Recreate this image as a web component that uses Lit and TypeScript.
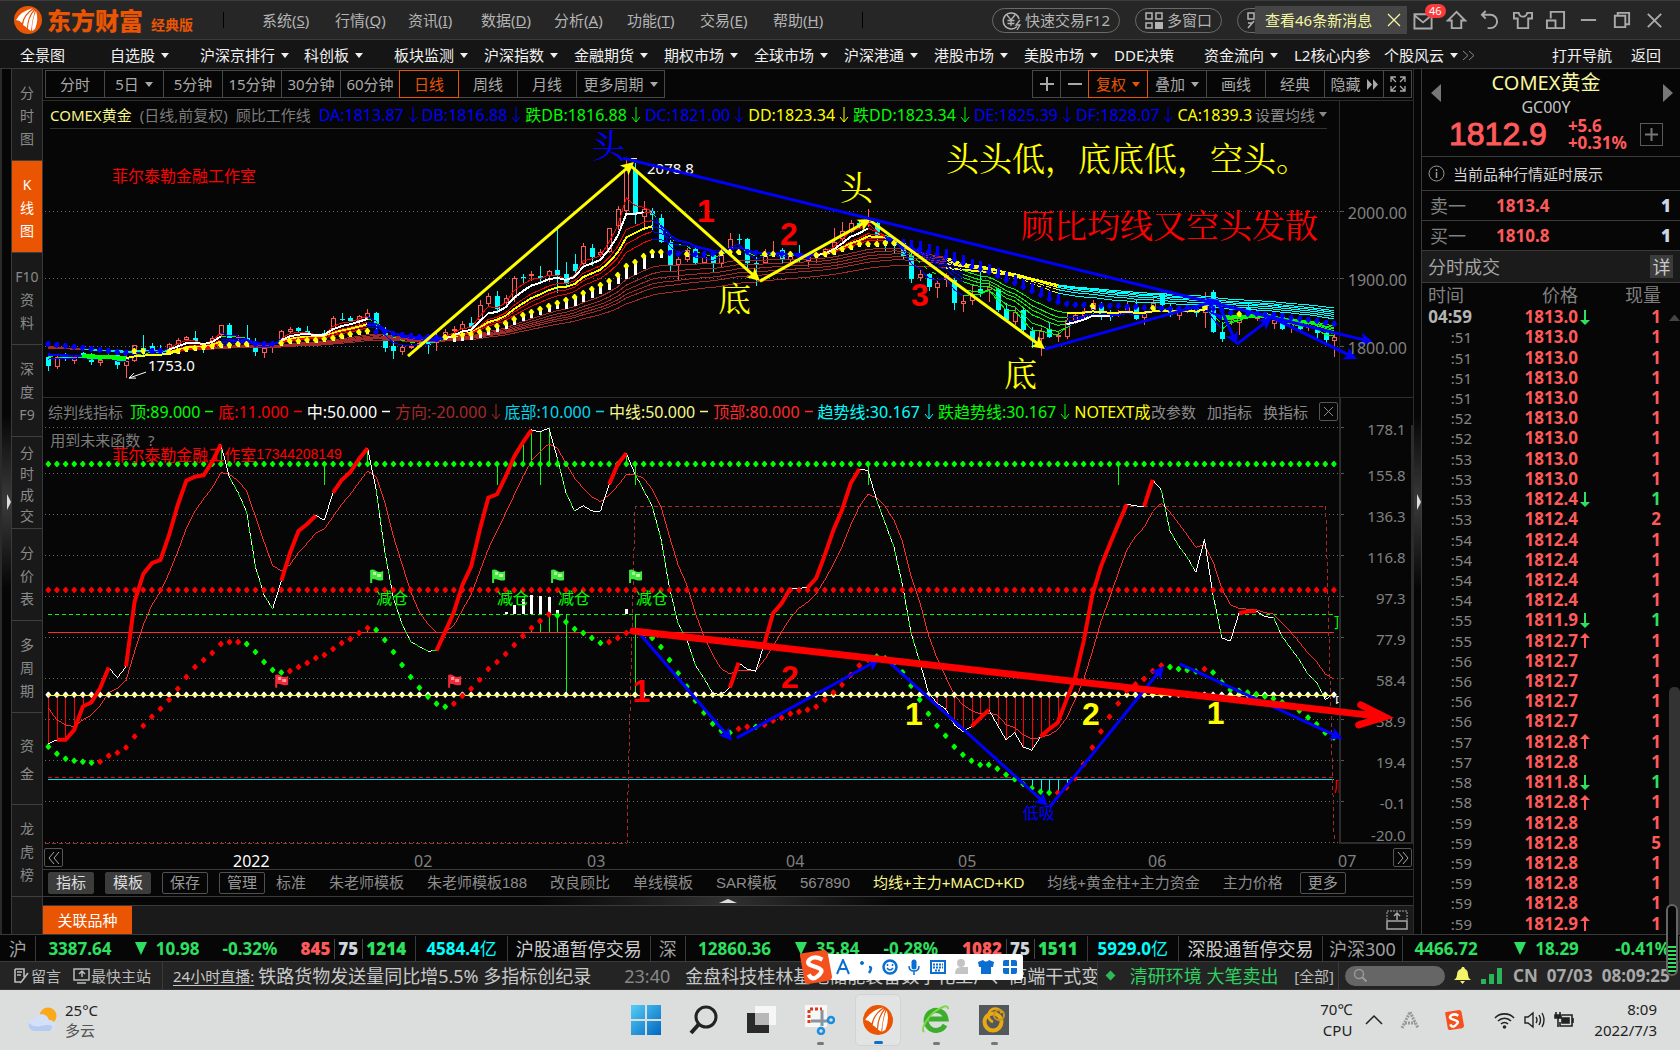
import { LitElement, html, svg, css, nothing } from "lit";
import { customElement } from "lit/decorators.js";

/* ---------- chart geometry ---------- */
const X = (i: number) => Math.round((48 + 8.632 * i) * 10) / 10;
const COUNT = 150;

type Pt = [number, number];

const line = (pts: Pt[], color: string, width = 1, dash = "") =>
  svg`<polyline points=${pts.map((p) => p.join(",")).join(" ")} fill="none" stroke=${color} stroke-width=${width} stroke-dasharray=${dash || nothing}></polyline>`;

const diamonds = (pts: Pt[], color: string) =>
  svg`<path fill=${color} d=${pts.map(([x, y]) => `M${x - 3} ${y}l2.500-3h1l2.500 3-2.500 3h-1z`).join("")}></path>`;

const arrow = (a: Pt, b: Pt, color: string, width: number, size = 13) => {
  const t = Math.atan2(b[1] - a[1], b[0] - a[0]);
  const at = (d: number, o: number): Pt => [
    Math.round((b[0] - d * Math.cos(t) - o * Math.sin(t)) * 10) / 10,
    Math.round((b[1] - d * Math.sin(t) + o * Math.cos(t)) * 10) / 10,
  ];
  const head = [b, at(size, size / 2), at(size * 0.75, 0), at(size, -size / 2)];
  return svg`${line([a, at(size / 2, 0)], color, width)}<polygon points=${head.map((p) => p.join(",")).join(" ")} fill=${color}></polygon>`;
};

const chartCss = css`
  :host { display: block; min-height: 0; }
  svg { display: block; width: 100%; height: 100%; }
  text { font-family: "Noto Sans", "Noto Sans CJK SC", sans-serif; font-size: 15px; dominant-baseline: central; }
  .crisp { shape-rendering: crispEdges; }
  .axis { fill: #808080; text-anchor: end; }
  .price { font-size: 16px; }
  .song { font-family: "Noto Serif CJK SC", "Noto Sans CJK SC", serif; font-size: 33px; }
  .small { font-family: "Noto Sans CJK SC", sans-serif; font-size: 16px; }
  .phone { font-family: "Liberation Sans", sans-serif; font-size: 14px; }
  .num { font-family: "Liberation Sans", sans-serif; font-size: 32px; font-weight: 700; text-anchor: middle; }
`;

/* Candles: kind, high, body top, body bottom, low (thirds of a pixel below y=120) */
const CANDLES = `c705,712,738,752 r705,712,740,747 c700,703,718,722 r708,712,722,732 c695,700,712,715 c700,710,725,734 r705,720,728,738 r700,705,712,716 c690,705,734,747 r690,724,738,773
r675,676,724,726 c645,683,690,705 c668,678,690,700 c675,690,700,707 r668,671,696,700 r655,659,671,676 r648,651,660,664 c633,654,663,665 c670,675,682,700 r648,653,663,668
r615,616,645,650 c609,616,653,655 r645,650,655,670 c615,655,663,668 c655,665,697,708 r680,685,698,713 r665,672,685,698 r630,634,668,670 r622,626,636,640 c620,625,633,635
c618,633,640,645 r645,648,655,660 c630,638,643,652 r588,595,628,630 c578,596,599,604 c587,594,602,606 r585,589,603,612 r567,580,594,598 c575,578,618,640 c620,640,684,696
c650,678,692,717 r675,681,695,704 r672,678,682,686 r665,670,680,684 c660,665,675,701 r640,655,668,692 r627,636,655,660 r618,627,634,637 r602,611,628,632 c590,608,620,630
r541,556,600,605 r520,529,552,562 c513,527,568,580 r526,533,548,560 r468,475,533,545 c463,471,474,490 r453,462,468,483 c438,467,473,490 r449,454,468,486 c325,450,466,518
c425,462,492,498 c402,432,452,470 r370,379,432,437 c372,384,410,438 r388,397,405,412 r323,325,396,400 r258,267,317,330 r118,150,272,278 c130,150,280,312 r243,267,290,325
c265,272,285,330 c282,293,365,370 c360,367,435,456 r412,418,434,480 r385,390,420,426 c375,388,430,432 r400,412,428,432 c400,405,432,457 r388,395,433,440 r340,357,385,392
c342,357,360,372 c354,357,428,445 c410,430,436,497 r388,400,428,433 r364,400,405,412 c385,390,418,430 r395,402,420,427 c375,400,410,430 r405,410,422,440 r395,400,410,428
r385,388,395,408 r325,365,390,395 r307,333,358,368 r300,310,335,340 c300,310,318,328 r268,296,308,320 c300,308,355,372 c350,360,368,395 c350,360,375,398 c358,370,408,418
c395,405,476,490 r450,463,475,482 c460,462,500,512 r480,488,503,533 r460,465,480,500 c475,480,548,570 r528,542,552,575 r495,522,542,555 c450,508,520,530 r485,500,510,545
c505,507,570,575 c548,567,600,605 r565,575,605,615 c560,570,630,640 c622,632,660,684 r625,632,658,708 c608,628,650,655 r632,646,652,665 r575,600,650,658 r582,585,600,612
r565,573,588,595 r540,548,570,575 c545,557,590,600 c570,578,590,602 r570,575,582,590 r545,560,575,580 c540,560,598,600 r570,575,595,615 r530,548,570,578 c520,522,555,560
c550,565,585,590 r565,572,588,600 r555,560,575,580 c555,565,580,592 r516,548,578,624 c510,516,635,640 c605,635,656,665 r560,590,600,615 r565,595,608,645 c550,560,575,590
r570,578,598,602 c575,580,590,600 r590,600,612,628 c600,605,628,630 r600,610,620,640 c598,602,628,632 r610,618,625,632 c610,630,638,656 c630,638,660,672 r640,652,662,710`
  .split(/\s+/)
  .map((s) => ({ up: s[0] === "r", v: s.slice(1).split(",").map((n) => 120 + Number(n) / 3) }));

const CLOSES = CANDLES.map((c) => (c.up ? c.v[1] : c.v[2]));
const ema = (n: number, start: number): Pt[] => {
  const k = 2 / (n + 1);
  let e = start;
  return CLOSES.map((c, i) => {
    e += (c - e) * k;
    return [X(i), Math.round(e * 10) / 10];
  });
};
const SHORT = [3, 5, 8, 10, 12, 15].map((n) => ema(n, 352));
const LONG = [30, 35, 40, 45, 50, 60].map((n, i) => ema(n, 345 + i / 2));

/* Centre average, given at its turning points and interpolated between them */
const MID_KEYS: Pt[] = [[0, 672], [5, 686], [9, 700], [10, 694], [13, 692], [14, 697], [16, 687], [20, 675], [22, 672], [26, 672], [28, 663], [32, 657], [34, 648], [37, 632], [39, 637], [42, 648], [45, 653], [47, 648], [50, 637], [53, 608], [56, 575], [59, 550], [62, 520], [65, 483], [66, 465], [67, 437], [68, 425], [69, 407], [70, 395], [71, 395], [72, 400], [76, 403], [80, 395], [83, 402], [86, 403], [88, 410], [90, 402], [92, 388], [94, 373], [98, 368], [99, 380], [101, 388], [104, 410], [107, 440], [109, 455], [111, 480], [113, 500], [115, 525], [117, 547], [119, 555], [125, 560], [130, 567], [134, 562], [137, 580], [142, 585], [146, 600], [149, 612]];
const MID: Pt[] = Array.from({ length: COUNT }, (_, i) => {
  const k = Math.max(1, MID_KEYS.findIndex((p) => p[0] >= i));
  const [a, b] = [MID_KEYS[k - 1], MID_KEYS[k]];
  return [X(i), Math.round(120 + (a[1] + ((b[1] - a[1]) * (i - a[0])) / (b[0] - a[0])) / 3)];
});
const within = (i: number, spans: Pt[]) => spans.some(([a, b]) => i >= a && i <= b);
const RISING: Pt[] = [[10, 11], [14, 23], [27, 37], [46, 71], [74, 74], [78, 80], [83, 84], [86, 86], [89, 98], [121, 121], [128, 128], [134, 134], [138, 138]];

@customElement("price-chart")
export class PriceChart extends LitElement {
  static styles = chartCss;

  render() {
    const cut = (l: Pt[], a: number, b: number) => l.slice(a, b + 1);
    const rise: Pt[] = [[14, 20], [27, 37], [46, 70], [89, 97]];
    const bold: Pt[] = [[14, 20], [27, 37], [46, 69], [89, 95]];
    const fall: Pt[] = [[0, 14], [20, 27], [37, 46], [70, 89], [97, 106], [118, 136]];
    const green: Pt[] = [[106, 118], [136, 149]];
    const idx = MID.map((_, i) => i);
    return html`<svg viewBox="43 129 1370 268" role="img" aria-label="COMEX黄金日线">
      <g class="crisp">
        ${[211, 278, 346].map((y) => svg`<path d=${`M45 ${y}.5H1340`} stroke="#6a6a6a" stroke-dasharray="1 3"></path><path d=${`M1340 ${y}.5h4`} stroke="#555"></path>`)}
        <path d="M1339.500 129V397" stroke="#2c2c2c"></path>
        ${CANDLES.map(({ up, v }, i) => {
          const x = Math.round(X(i));
          const [h, t, b, l] = v.map(Math.round);
          return up
            ? svg`<path d=${`M${x}.5 ${h}V${t}M${x}.5 ${b}V${l}`} stroke="#ff5a5a"></path><rect x=${x - 1.5} y=${t + 0.5} width="4" height=${Math.max(1, b - t - 1)} fill="none" stroke="#ff5a5a"></rect>`
            : svg`<path d=${`M${x}.5 ${h}V${l}`} stroke="#0ff"></path><rect x=${x - 2} y=${t} width="5" height=${Math.max(1, b - t)} fill="#0ff"></rect>`;
        })}
        ${LONG.map((l, n) => [
          line(cut(l, 0, 4), "#a52a2a"),
          line(cut(l, 4, 14), "#00e5e5"),
          line(cut(l, 14, 104), "#a52a2a"),
          line(cut(l, 104, 117), "#ff0", n > 3 ? 2 : 1, n < 2 ? "6 2" : ""),
          line(cut(l, 117, 149), "#0ff"),
        ])}
        ${rise.map(([a, b]) => SHORT.map((l, n) => line(cut(l, a, b), n === 3 ? "#ff0" : "#f00", n === 3 ? 2 : 1)))}
        ${fall.map(([a, b]) => SHORT.map((l, n) => line(cut(l, a, b), n === 1 ? "#0f0" : "#00f", 1, n === 1 ? "5 5" : "")))}
        ${green.map(([a, b]) => SHORT.map((l) => line(cut(l, a, b), "#0f0")))}
        ${[4, 5].map((n) => line(cut(SHORT[n], 4, 9), "#0f0", 4))}
        ${line(cut(SHORT[5], 9, 15), "#ff0", 2)}
        ${line(cut(SHORT[5], 118, 134), "#ff0", 2)}
        ${line(cut(SHORT[2], 118, 123), "#fff", 2)}
        ${line(cut(SHORT[4], 136, 142), "#0f0", 4)}
        ${bold.map(([a, b]) => line(cut(SHORT[1], a, b), "#fff", 2))}
        ${idx.map((i) => {
          const [x, y] = MID[i];
          if (within(i, RISING)) {
            const len = i >= 47 && i <= 71 ? (i < 60 ? 6 : i < 67 ? 9 : i < 70 ? 13 : 6) : 3;
            return svg`<rect x=${Math.round(x) - 1} y=${y} width="3" height=${len} fill="#fff"></rect>`;
          }
          const len = i > 98 && i < 118 ? 8 : 3;
          return svg`<rect x=${Math.round(x) - 1} y=${y - len} width="3" height=${len} fill="#00f"></rect>`;
        })}
      </g>
      ${diamonds(idx.filter((i) => within(i, RISING)).map((i) => MID[i]), "#ff0")}
      ${diamonds(idx.filter((i) => !within(i, RISING)).map((i) => MID[i]), "#00f")}
      <text class="small" x="112" y="175" fill="#f00">菲尔泰勒金融工作室</text>
      <text x="148" y="365" fill="#fff">1753.0</text>
      <path d="M146 372L129 378M134 373l-5 5 7 0" stroke="#fff" fill="none"></path>
      <text x="647" y="168" fill="#fff">2078.8</text>
      <path d="M631 158.500h6" stroke="#fff"></path>
      ${arrow([408, 356], [634, 162], "#ff0", 3)}
      ${arrow([630, 165], [760, 281], "#ff0", 3)}
      ${arrow([760, 281], [871, 219], "#ff0", 3)}
      ${arrow([871, 221], [1045, 349], "#ff0", 3)}
      ${arrow([623, 158], [1373, 342], "#00f", 3)}
      ${arrow([1045, 349], [1219, 300], "#00f", 3)}
      ${arrow([1217, 300], [1237, 345], "#00f", 3)}
      ${arrow([1237, 344], [1272, 317], "#00f", 3)}
      ${arrow([1271, 317], [1357, 359], "#00f", 3)}
      <text class="song" x="592" y="143" fill="#00f">头</text>
      <text class="song" x="718" y="296" fill="#ff0">底</text>
      <text class="song" x="840" y="185" fill="#ff0">头</text>
      <text class="song" x="1004" y="371" fill="#ff0">底</text>
      <text class="song" x="946" y="156" fill="#ff0">头头低，底底低，空头。</text>
      <text class="song" x="1021" y="223" fill="#f00">顾比均线又空头发散</text>
      <text class="num" x="706" y="211" fill="#f00">1</text>
      <text class="num" x="789" y="234" fill="#f00">2</text>
      <text class="num" x="920" y="295" fill="#f00">3</text>
      ${[["2000.00", 213], ["1900.00", 280], ["1800.00", 348]].map(([t, y]) => svg`<text class="axis price" x="1407" y=${y}>${t}</text>`)}
    </svg>`;
  }
}

const toY = (s: string): Pt[] => s.split(",").map((n, i) => [X(i), Math.round((395 + Number(n) / 3) * 10) / 10]);

const FAST = toY("1047,1035,1035,1005,935,922,880,818,849,815,620,537,505,495,420,330,257,245,241,200,148,248,293,352,515,600,642,558,475,408,387,362,375,293,255,232,192,160,285,470,610,688,740,755,769,767,710,652,570,515,405,308,298,245,185,142,105,111,99,190,295,348,332,348,349,268,208,175,238,285,335,430,580,685,735,812,850,895,900,878,803,823,829,745,655,625,580,580,578,550,480,405,345,265,222,227,315,385,455,570,715,800,893,925,942,990,1010,995,970,945,990,1035,1013,1057,1066,1025,1003,983,915,850,740,600,515,450,388,328,333,334,255,285,408,452,487,532,433,600,729,739,655,650,648,666,667,725,760,795,838,862,915,895");
const SLOW = toY("940,975,990,995,975,960,933,893,880,857,770,690,630,590,535,470,400,348,312,278,233,238,258,288,365,440,512,528,510,473,445,415,402,365,328,298,262,228,245,322,425,508,590,652,688,712,712,692,645,600,530,462,408,355,300,245,198,170,147,160,205,250,280,305,320,300,272,239,239,250,283,335,425,510,570,655,725,780,822,837,827,826,827,795,755,710,670,640,622,597,555,508,455,390,335,298,308,335,375,440,545,620,720,790,845,900,930,947,957,955,960,990,998,1020,1032,1028,1020,1005,970,915,855,770,680,610,535,465,425,397,350,325,352,385,420,457,450,500,580,630,640,643,645,653,657,685,712,742,775,800,838,852");
const TREND = toY("1056,1077,1092,1098,1101,1104,1101,1083,1074,1058,1025,993,966,942,915,882,846,816,795,774,747,741,741,747,771,801,825,833,828,816,804,789,780,762,744,732,714,699,705,735,771,810,846,879,906,927,936,927,903,882,855,822,801,777,750,723,699,678,659,662,681,702,714,729,744,741,729,714,708,715,729,756,795,835,875,918,954,987,1008,1014,1002,996,996,990,978,969,957,951,945,936,915,893,870,840,812,795,785,790,805,832,873,915,957,993,1023,1056,1080,1098,1110,1110,1122,1140,1153,1168,1180,1191,1194,1194,1178,1150,1108,1058,1010,966,926,888,868,852,828,812,816,822,825,830,822,833,862,885,888,893,898,905,912,922,935,948,968,988,1014,1028");
const TREND_UP: Pt[] = [[6, 22], [28, 37], [47, 58], [65, 68], [80, 81], [83, 95], [117, 129], [134, 134]];
const THICK: Pt[] = [[1, 7], [9, 20], [27, 31], [33, 37], [45, 56], [65, 67], [79, 80], [83, 86], [88, 94], [107, 109], [115, 125], [127, 128], [138, 140]];
/* Vertical stems: bar index, top, bottom */
const GREEN_STEMS = [[20, 150, 207], [32, 207, 270], [37, 165, 207], [52, 207, 270], [55, 145, 207], [56, 105, 207], [57, 111, 270], [58, 99, 207], [67, 178, 200], [68, 207, 270], [95, 212, 270], [124, 207, 270], [37, 699, 712], [56, 699, 712], [57, 678, 712], [58, 660, 712], [59, 662, 712], [60, 657, 900], [68, 657, 900]];
const WHITE_BARS = [[53, 651], [54, 630], [55, 612], [56, 600], [57, 603], [58, 606], [59, 645], [67, 643]];

@customElement("indicator-chart")
export class IndicatorChart extends LitElement {
  static styles = chartCss;

  render() {
    const all = Array.from({ length: COUNT }, (_, i) => X(i));
    const stem = (i: number, a: number, b: number, color: string) =>
      svg`<path d=${`M${Math.round(X(i))}.5 ${Math.round(395 + a / 3)}V${Math.round(395 + b / 3)}`} stroke=${color}></path>`;
    const flag = (x: number, y: number, c1: string, c2: string) =>
      svg`<path d=${`M${x} ${y}q3-1 6 1t7 0v9q-3 1-6 0t-5-1v4h-2z`} fill=${c1}></path><path d=${`M${x + 3} ${y + 2}h3v3h-3zM${x + 7} ${y + 4}h4v3h-4z`} fill=${c2}></path>`;
    const grid = [427, 473, 514, 555, 596, 637, 678, 719, 760, 801, 842];
    const labels = ["178.1", "155.8", "136.3", "116.8", "97.3", "77.9", "58.4", "38.9", "19.4", "-0.1", "-20.0"];
    return html`<svg viewBox="43 425 1370 419" role="img" aria-label="综判线指标">
      <clipPath id="plot"><rect x="43" y="425" width="1296" height="419"></rect></clipPath>
      <g class="crisp">
        ${grid.map((y) => svg`<path d=${`M45 ${y}.5H1340`} stroke="#6a6a6a" stroke-dasharray="1 3"></path><path d=${`M1340 ${y}.5h4`} stroke="#555"></path>`)}
        <path d="M1340.500 425V843H1412V425" stroke="#2c2c2c" stroke-width="2" fill="none"></path>
        <path d="M48 614.500H1334" stroke="#0f0" stroke-dasharray="4 3"></path>
        <path d="M48 632.500H1334" stroke="#ff2a2a"></path>
        <path d="M48 777.500H1334" stroke="#f00" stroke-dasharray="4 3"></path>
        <path d="M48 779.500H1334" stroke="#00e5ff"></path>
        <path d="M45 843.500H627L628 790 635 507.500V506.500H1326L1334.500 843" fill="none" stroke="#a52a2a" stroke-dasharray="4 3"></path>
        ${FAST.map(([, y], i) => (i < 5 || (i > 102 && i < 118) ? stem(i, 900, (y - 395) * 3, "#f00") : nothing))}
        ${[114, 115, 116, 117, 118].map((i) => stem(i, 1153, (TREND[i][1] - 395) * 3, "#0ff"))}
        ${GREEN_STEMS.map(([i, a, b]) => stem(i, a, b, "#0f0"))}
        ${WHITE_BARS.map(([i, a]) => svg`<rect x=${Math.round(X(i)) - 1} y=${Math.round(395 + a / 3)} width="3" height=${Math.max(2, Math.round((657 - a) / 3))} fill="#fff"></rect>`)}
        ${line(SLOW, "#ff2a2a")}
        ${line(FAST, "#fff")}
        ${[[21, 26], [38, 45], [59, 61], [68, 77], [96, 101], [129, 133], [135, 136], [142, 148]].map(([a, b]) => line(FAST.slice(a, b + 1), "#0f0", 1, "5 4"))}
      </g>
      ${diamonds(all.map((x) => [x, 464]), "#0f0")}
      ${diamonds(all.map((x) => [x, 590]), "#f00")}
      ${diamonds(all.map((x) => [x, 695]), "#fff")}
      <path class="crisp" d="M48 695.500H1334" stroke="#ff0"></path>
      ${diamonds(TREND.filter((_, i) => !within(i, TREND_UP)), "#0f0")}
      ${diamonds(TREND.filter((_, i) => within(i, TREND_UP)), "#f00")}
      ${THICK.map(([a, b]) => line(FAST.slice(a, b + 1), "#f00", 4))}
      <text x="50" y="440" fill="#7c7c7c" font-size="14">用到未来函数 &nbsp;?</text>
      <text class="small" x="112" y="454" fill="#f00">菲尔泰勒金融工作室<tspan class="phone">17344208149</tspan></text>
      ${[370, 492, 551, 629].map((x) => flag(x, 570, "#3fe83f", "#b4ff9a"))}
      ${[275, 448].map((x) => flag(x, 675, "#f02a3a", "#ff9a9a"))}
      ${[376, 497, 558, 636].map((x) => svg`<text class="small" x=${x} y="597" fill="#0f0">减仓</text>`)}
      <text class="small" x="1023" y="812" fill="#00f">低吸</text>
      <g clip-path="url(#plot)">
        <text x="1334" y="622" fill="#0f0">顶</text>
        <text x="1335" y="700" fill="#fff">中</text>
        <text x="1334" y="785" fill="#f00">底</text>
      </g>
      ${arrow([639, 633], [732, 741], "#00f", 3)}
      ${arrow([737, 738], [880, 659], "#00f", 3)}
      ${arrow([890, 663], [1048, 806], "#00f", 3)}
      ${arrow([1050, 807], [1164, 666], "#00f", 3)}
      ${arrow([1180, 664], [1343, 739], "#00f", 3)}
      ${labels.map((t, i) => svg`<text class="axis" x="1406" y=${i === 10 ? 835 : grid[i] + 2}>${t}</text>`)}
      <path d="M633 631L1385 717M1361 705L1385 717 1359 725" fill="none" stroke="#f00" stroke-width="7" stroke-linecap="round"></path>
      <text class="num" x="641" y="691" fill="#f00">1</text>
      <text class="num" x="790" y="677" fill="#f00">2</text>
      <text class="num" x="914" y="714" fill="#ff0">1</text>
      <text class="num" x="1091" y="714" fill="#ff0">2</text>
      <text class="num" x="1216" y="713" fill="#ff0">1</text>
    </svg>`;
  }
}

/* ---------- page data ---------- */
const MENU = [["系统", "S"], ["行情", "Q"], ["资讯", "I"], ["数据", "D"], ["分析", "A"], ["功能", "T"], ["交易", "E"], ["帮助", "H"]];
const NAV: [string, boolean][] = [["全景图", false], ["自选股", true], ["沪深京排行", true], ["科创板", true], ["板块监测", true], ["沪深指数", true], ["金融期货", true], ["期权市场", true], ["全球市场", true], ["沪深港通", true], ["港股市场", true], ["美股市场", true], ["DDE决策", false], ["资金流向", true], ["L2核心内参", false], ["个股风云", true]];
const SIDE = [["分", "时", "图"], ["K", "线", "图"], ["F10", "资", "料"], ["深", "度", "F9"], ["分", "时", "成", "交"], ["分", "价", "表"], ["多", "周", "期"], ["资", "金"], ["龙", "虎", "榜"]];
const PERIODS = ["分时", "5日", "5分钟", "15分钟", "30分钟", "60分钟", "日线", "周线", "月线"];
const LEGEND1 = [["DA:1813.87", "#00f"], ["DB:1816.88", "#00f"], ["跌DB:1816.88", "#0f0"], ["DC:1821.00", "#00f"], ["DD:1823.34", "#ff0"], ["跌DD:1823.34", "#0f0"], ["DE:1825.39", "#00f"], ["DF:1828.07", "#00f"]];
const LEGEND2 = [["顶:89.000", "#0f0", "-"], ["底:11.000", "#f00", "-"], ["中:50.000", "#fff", "-"], ["方向:-20.000", "#a52a2a", "v"], ["底部:10.000", "#00d8f0", "-"], ["中线:50.000", "#f7f78c", "-"], ["顶部:80.000", "#ff2a2a", "-"], ["趋势线:30.167", "#0ff", "v"], ["跌趋势线:30.167", "#0f0", "v"]];
const DATES: [string, number][] = [["2022", 233], ["02", 414], ["03", 587], ["04", 786], ["05", 958], ["06", 1148], ["07", 1338]];
const TEMPLATES = ["标准", "朱老师模板", "朱老师模板188", "改良顾比", "单线模板", "SAR模板", "567890", "均线+主力+MACD+KD", "均线+黄金柱+主力资金", "主力价格"];
const TICKS = `04:59 1813.0v 1|:51 1813.0 1|:51 1813.0 1|:51 1813.0 1|:51 1813.0 1|:52 1813.0 1|:52 1813.0 1|:53 1813.0 1|:53 1813.0 1|:53 1812.4v 1g|:53 1812.4 2|:54 1812.4 1|:54 1812.4 1|:54 1812.4 1|:54 1812.4 1|:55 1811.9v 1g|:55 1812.7^ 1|:56 1812.7 1|:56 1812.7 1|:56 1812.7 1|:56 1812.7 1|:57 1812.8^ 1|:57 1812.8 1|:58 1811.8v 1g|:58 1812.8^ 1|:59 1812.8 1|:59 1812.8 5|:59 1812.8 1|:59 1812.8 1|:59 1812.8 1|:59 1812.9^ 1`
  .split("|")
  .map((r) => r.split(" "));

/* ---------- icons ---------- */
const icon = (w: number, h: number, body: unknown) =>
  html`<svg class="ico" width=${w} height=${h} viewBox="0 0 ${w} ${h}" fill="none" stroke="currentColor" aria-hidden="true">${body}</svg>`;
const caret = html`<i class="caret"></i>`;
const markDown = icon(10, 17, svg`<path d="M5 1v15M1 11l4 5 4-5"></path>`);
const markFlat = icon(10, 17, svg`<path d="M1 8.500h8" stroke-width="1.500"></path>`);
const logo = (s: number) => html`<svg class="ico" width=${s} height=${s} viewBox="0 0 28 28" aria-hidden="true">
  <circle cx="14" cy="14" r="14" fill="#ea5504"></circle>
  <path fill="#fff" d="M2 14Q7 5 19 2 10 8 8 17 5 14 2 14zM9 19Q10 9 20 3 13 12 13 22 11 20 9 19zM14 23Q14 12 21 4 18 14 17 25 16 24 14 23zM18 25Q18 14 22 5 25 13 21 23z"></path></svg>`;
const sogou = (s: number) => html`<svg class="ico" width=${s} height=${s} viewBox="0 0 32 32" aria-hidden="true">
  <path d="M2 6Q1 3 4 3L24 0Q27 0 28 3L32 25Q32 28 29 29L10 32Q6 32 6 29z" fill="#f4511e"></path>
  <path d="M23 9Q15 5 11 9T14 15 22 19 18 25 10 23" fill="none" stroke="#fff" stroke-width="4"></path></svg>`;
const vArrow = (up: boolean) => html`<svg class="ico" width="10" height="15" viewBox="0 0 10 15" aria-hidden="true">
  ${up ? svg`<path d="M5 0l5 5H6v10H4V5H0z" fill="#ff5a5a"></path>` : svg`<path d="M4 0h2v10h4l-5 5-5-5h4z" fill="#2fe060"></path>`}</svg>`;

const WINDOW_ICONS: [string, unknown][] = [
  ["消息", svg`<path d="M1.500 4.500h18v15h-18zM2 6l8.500 7L19 6" stroke-width="2"></path>`],
  ["主页", svg`<path d="M11 2L2 11h4v8h10v-8h4z" stroke-width="2"></path>`],
  ["返回上页", svg`<path d="M7 1L3 5l4 4M3 5h9a6.500 6.500 0 010 14H9" stroke-width="2"></path>`],
  ["换肤", svg`<path d="M7 3L2 3 2 9h4v10h11V9h4V3h-5q-1 4-4.500 4T7 3z" stroke-width="2"></path>`],
  ["小窗", svg`<path d="M6 9V2h14v17h-9M2 11h9v8H2z" stroke-width="2"></path>`],
  ["最小化", svg`<path d="M3 10.500h16" stroke-width="2"></path>`],
  ["还原", svg`<path d="M4 6h11v12H4zM7 6V3h12v12h-4" stroke-width="2"></path>`],
  ["关闭", svg`<path d="M4 4l14 14M18 4L4 18" stroke-width="2"></path>`],
];

@customElement("app-root")
export class AppRoot extends LitElement {
  static styles = css`
    :host { display: block; font: 15px/20px "Noto Sans", "Noto Sans CJK SC", sans-serif; color: #a8a8a8; background: #060606; }
    * { box-sizing: border-box; }
    button, input { font: inherit; color: inherit; background: none; border: 0; padding: 0; margin: 0; }
    a { color: inherit; text-decoration: none; }
    .ico { display: block; flex: none; }
    .page { min-height: 100vh; display: flex; flex-direction: column; position: relative; overflow: hidden; }
    .caret { flex: none; border: 4px solid transparent; border-top: 5px solid currentColor; border-bottom: 0; }

    .title { height: 40px; flex: none; display: flex; align-items: center; background: #262626; border-top: 1px solid #3c3c3c; border-bottom: 1px solid #3a3a3a; padding: 0 9px 0 14px; color: #b4b4b4; white-space: nowrap; }
    .brand { font-size: 24px; font-weight: 900; color: #ea5504; margin-left: 5px; line-height: 38px; font-family: "Noto Sans CJK SC", sans-serif; }
    .edition { font-size: 14px; font-weight: 700; color: #ea5504; margin: 10px 30px 0 8px; }
    .vbar { width: 1px; height: 16px; background: #000; }
    .menu { display: grid; grid-template-columns: repeat(8, 73px); margin: 0 16px 0 38px; }
    .menu button { text-align: left; }
    .pills { margin-left: auto; display: flex; gap: 15px; }
    .pill { height: 25px; border: 1px solid #6a6a6a; border-radius: 13px; display: flex; align-items: center; gap: 4px; padding: 0 9px; }
    .pill.latent { width: 158px; padding: 0 8px; }
    .slot { position: relative; }
    .notice { position: absolute; left: 18px; top: -2px; width: 152px; height: 28px; background: #454545; color: #f4f7a0; display: flex; align-items: center; justify-content: space-between; padding: 0 6px 0 10px; }
    .wins { display: flex; margin-left: 12px; }
    .wins button { width: 33px; height: 30px; display: grid; place-items: center; position: relative; }
    .badge { position: absolute; left: 18px; top: -1px; background: #fb3b3b; color: #fff; border-radius: 7px; font-size: 11px; line-height: 14px; padding: 0 4px; z-index: 1; }

    .nav { height: 29px; flex: none; display: flex; align-items: center; background: #151515; border-bottom: 1px solid #3a3a3a; padding: 2px 19px 0 20px; color: #f0f0f0; white-space: nowrap; }
    .nav a { width: 90px; display: flex; align-items: center; gap: 6px; }
    .nav a.wide { width: 104px; }
    .nav a.tail { width: auto; margin-left: 19px; }
    .nav a.snug { width: auto; }
    .nav .more { margin: 0 auto 0 4px; color: #888; }

    .main { flex: 1; display: grid; grid-template-columns: 11px 32px minmax(0, 1fr) 9px 258px; min-height: 640px; }
    .gutter { background: linear-gradient(#060606 40%, #3a3a3a 50%, #060606 60%); display: grid; place-items: center end; border-left: 2px solid #2a2a2a; }
    .gutter.right { border-left: 1px solid #2c2c2c; border-right: 1px solid #3a3a3a; }
    .grip { border: 8px solid transparent; border-left: 4px solid #ddd; border-right: 0; }
    .side { background: #191919; border: solid #3a3a3a; border-width: 0 1px; display: flex; flex-direction: column; font-size: 14px; color: #8a8a8a; }
    .side button { height: 92px; border-bottom: 1px solid #3f3f3f; display: flex; flex-direction: column; justify-content: center; align-items: center; line-height: 23px; padding-top: 2px; }
    .side button.four { line-height: 21px; }
    .side button.two { line-height: 28px; }
    .side button.on { background: #ea5504; color: #fff; }

    .center { display: flex; flex-direction: column; min-width: 0; }
    .tools { height: 31px; flex: none; display: flex; justify-content: space-between; padding: 1px 2px 0; }
    .set { display: flex; height: 28px; }
    .set button { width: 60px; margin-right: -1px; border: 1px solid #484848; display: flex; align-items: center; justify-content: center; gap: 6px; white-space: nowrap; }
    .set button.more { width: 89px; }
    .set button.sq { width: 29px; }
    .set button.on { border-color: #ea5504; color: #ea5504; position: relative; }
    .pane { border-top: 1px solid #2c2c2c; display: flex; flex-direction: column; min-height: 0; overflow: hidden; }
    .pane.p1 { flex: 297 1 0; }
    .pane.p2 { flex: 447 1 0; }
    .pane > :last-child { flex: 1; }
    .legend { flex: none; margin-right: 73px; height: 28px; padding: 0 12px 0 7px; border-right: 1px solid #2c2c2c; white-space: nowrap; font-size: 16px; }
    .legend .row { height: 28px; display: flex; align-items: center; border-bottom: 1px solid #333; }
    .legend.l2 { height: 27px; padding: 0 1px 0 5px; border-right: 2px solid #2c2c2c; margin-right: 72px; }
    .legend.l2 .row { border: 0; height: 27px; }
    .items { display: flex; align-items: center; gap: 4px; flex: 1; min-width: 0; overflow: hidden; }
    .item { display: flex; align-items: center; gap: 4px; flex: none; }
    .name { font-size: 15px; flex: none; margin-right: 4px; }
    .l2 .name { margin-right: 3px; }
    .yellow { color: #f7f78c; }
    .dim { color: #7c7c7c; }
    .set-ma { font-size: 15px; color: #8a8a8a; display: flex; align-items: center; gap: 4px; }
    .ops { display: flex; gap: 11px; align-items: center; color: #8a8a8a; font-size: 15px; }
    .xbox { width: 19px; height: 19px; border: 1px solid #555; border-radius: 2px; display: grid; place-items: center; }

    .dates { height: 25px; flex: none; display: flex; padding: 4px 1px 2px; }
    .dates button { width: 19px; height: 19px; border: 1px solid #555; border-radius: 2px; display: grid; place-items: center; }
    .dates > svg { flex: 1; min-width: 0; height: 25px; margin-top: -4px; overflow: visible; }
    .dates text { font: 16px "Noto Sans", sans-serif; fill: #808080; dominant-baseline: central; }
    .dates text.year { fill: #fff; }
    .templates { height: 27px; flex: none; border-top: 1px solid #3a3a3a; display: flex; align-items: center; gap: 11px; padding: 0 5px; white-space: nowrap; font-family: "Liberation Sans", "Noto Sans CJK SC", sans-serif; color: #8c8c8c; }
    .templates .box { width: 46px; height: 22px; border: 1px solid #505050; border-radius: 2px; color: #999; }
    .templates .box.fill { background: #3c3c3c; border-color: #3c3c3c; color: #ddd; }
    .list { display: flex; gap: 23px; margin-right: 6px; }
    .strip { height: 9px; flex: none; border-top: 1px solid #3a3a3a; display: grid; place-items: center; background: linear-gradient(90deg, #060606 36%, #303030 50%, #060606 62%); }
    .strip i { border: 9px solid transparent; border-bottom: 4px solid #ddd; border-top: 0; }
    .tabs { height: 29px; flex: none; border-top: 1px solid #3a3a3a; background: #1a1a1a; display: flex; justify-content: space-between; align-items: center; padding-right: 5px; }
    .tabs .tab { width: 89px; height: 28px; background: #ea5504; color: #fff; }

    .quote { display: flex; flex-direction: column; min-width: 0; }
    .head { height: 88px; padding: 0 7px 0 9px; display: grid; grid-template-columns: 10px 1fr 10px; grid-template-rows: 28px 20px 34px; align-items: center; border-bottom: 1px solid #3a3a3a; text-align: center; }
    .tri { border: 9px solid transparent; height: 18px; grid-row: 1 / 3; }
    .tri.l { border-right: 10px solid #777; border-left: 0; }
    .tri.r { border-left: 10px solid #777; border-right: 0; grid-column: 3; grid-row: 1 / 3; }
    .head h1 { margin: 0; font-size: 20px; line-height: 28px; font-weight: 400; color: #f7f7a0; padding-right: 12px; }
    .code { grid-column: 2; color: #c4c4c4; font-size: 16px; padding-right: 12px; }
    .deal { grid-column: 1 / 4; display: flex; align-items: center; padding: 0 10px 0 18px; color: #ff5a5a; }
    .px { font: 500 32px/32px "Liberation Sans", sans-serif; -webkit-text-stroke: 1px #ff5a5a; }
    .chg { font-weight: 700; font-size: 17px; line-height: 17px; text-align: left; margin-left: 21px; }
    .add { width: 23px; height: 23px; border: 1px solid #5a5a5a; margin-left: auto; display: grid; place-items: center; color: #777; }
    .tip { height: 34px; border-bottom: 1px solid #3a3a3a; display: flex; align-items: center; gap: 8px; padding-left: 6px; color: #d4d4d4; }
    .lvl { height: 30px; border-bottom: 1px solid #3a3a3a; display: flex; align-items: center; padding: 0 9px 0 8px; font-size: 17px; font-weight: 700; color: #ff5a5a; }
    .lvl span { font-size: 18px; font-weight: 400; color: #808080; width: 66px; }
    .lvl b { margin-left: auto; color: #ccd6e4; }
    .sec { height: 32px; background: #1b1b1b; border-bottom: 1px solid #3a3a3a; display: flex; align-items: center; justify-content: space-between; padding: 0 7px 0 6px; font-size: 18px; color: #a4a4a4; }
    .sec button { width: 23px; height: 23px; background: #3c3c3c; color: #c8c8c8; line-height: 22px; }
    .ticks { flex: 1; display: grid; grid-template-columns: 1fr 11px; }
    table { width: 100%; height: 100%; border-collapse: collapse; table-layout: fixed; }
    th { height: 24px; font-size: 18px; font-weight: 400; color: #808080; padding: 0; line-height: 20px; text-align: right; }
    th.when { text-align: left; padding-left: 6px; }
    td { padding: 0; text-align: right; font-weight: 700; font-size: 17px; line-height: 18px; color: #ff5a5a; }
    td.t { font-weight: 400; font-size: 15px; color: #858585; }
    tr.first td.t { font-weight: 700; font-size: 17px; color: #b4b4b4; }
    td.a { padding-left: 2px; }
    th.q, td.q { padding-right: 8px; }
    td.gr { color: #2fe060; }
    .bar { display: flex; flex-direction: column; }
    .bar::before { content: ""; height: 6px; margin-top: 26px; border: 5px solid transparent; border-bottom: 6px solid #444; border-top: 0; }
    .bar i { flex: 1; margin-top: 366px; background: #333; border-radius: 5px 5px 0 0; }

    .index { height: 28px; flex: none; border-top: 1px solid #3a3a3a; border-bottom: 1px solid #3a3a3a; padding-top: 1px; display: flex; white-space: nowrap; font-size: 17px; font-weight: 700; color: #2fe060; }
    .index > div { border-right: 1px solid #3a3a3a; display: flex; align-items: center; overflow: hidden; flex: var(--w) 1 0; }
    .index .lab { justify-content: center; font-size: 18px; font-weight: 400; color: #a0a0a0; }
    .index .bright { color: #ccc; }
    .index .q { justify-content: space-between; padding: 0 9px 0 12px; }
    .index .amt { justify-content: center; color: #0ff; }
    .index .amt span { font-weight: 400; }
    .drop { display: flex; align-items: center; gap: 9px; }
    .drop::before { content: ""; border: 6px solid transparent; border-top: 13px solid #2fe060; border-bottom: 0; }
    .cnt { display: flex; align-items: center; }
    .cnt b + b { border-left: 1px solid #444; padding-left: 3px; margin-left: 4px; }
    .red { color: #ff5a5a; }
    .white { color: #ccd6dc; }

    .news { height: 28px; flex: none; background: #242424; border-bottom: 1px solid #333; display: flex; align-items: center; white-space: nowrap; color: #bbb; }
    .links { width: 163px; align-self: stretch; border-right: 1px solid #3a3a3a; display: flex; align-items: center; padding-left: 13px; gap: 12px; flex: none; }
    .links a { display: flex; align-items: center; gap: 1px; }
    .feed { flex: 1; min-width: 0; overflow: hidden; display: flex; align-items: center; padding-left: 10px; font-size: 18px; line-height: 26px; color: #c8c8c8; }
    .feed .live { font-size: 15px; text-decoration: underline; text-underline-offset: 3px; line-height: 20px; margin-right: 4px; }
    .feed time { color: #888; margin: 0 15px 0 33px; }
    .alert { width: 242px; flex: none; align-self: stretch; border: solid #3a3a3a; border-width: 0 1px; display: flex; align-items: center; justify-content: space-between; padding: 0 4px 0 9px; color: #2fd060; font-size: 18px; }
    .alert button { font-size: 15px; color: #bbb; }
    .dia { width: 7px; height: 7px; background: #2fb858; transform: rotate(45deg); }
    .state { width: 341px; flex: none; display: flex; align-items: center; padding-left: 6px; gap: 9px; font-size: 17px; font-weight: 700; color: #a8a8a8; }
    .find { width: 100px; height: 20px; border-radius: 10px; background: #666; display: flex; align-items: center; padding-left: 8px; gap: 4px; color: #999; }
    .find input { width: 70px; outline: none; }

    .task { height: 60px; flex: none; background: #dcdedd; display: grid; grid-template-columns: 1fr auto 1fr; align-items: center; color: #222; }
    .weather { display: flex; align-items: center; gap: 8px; padding-left: 27px; line-height: 20px; }
    .weather span { color: #555; }
    .apps { display: flex; gap: 12px; padding-right: 40px; }
    .apps button { width: 46px; height: 52px; border-radius: 5px; display: grid; place-items: center; position: relative; }
    .apps button.on { background: #e2e4e4; border: 1px solid #d2d4d4; }
    .apps button.run::after { content: ""; position: absolute; bottom: 1px; width: 7px; height: 3px; border-radius: 2px; background: #777; }
    .apps button.on::after { background: #0a6fd0; width: 9px; }
    .tray { display: flex; align-items: center; justify-content: flex-end; padding-right: 23px; line-height: 21px; text-align: right; }
    .tray .sys { display: flex; align-items: center; gap: 9px; margin: 0 19px 0 13px; }
    .ime { position: absolute; left: 798px; bottom: 66px; height: 34px; display: flex; align-items: center; }
    .ime div { background: #fff; height: 26px; width: 203px; margin-left: -12px; display: flex; align-items: center; justify-content: space-between; padding: 0 6px 0 16px; color: #0a6fd0; border-radius: 3px; }
    .ime > svg { position: relative; }
    .meter { position: absolute; right: 2px; bottom: 74px; width: 12px; height: 72px; border: 2px solid #666; border-radius: 6px; background: linear-gradient(#060606, #060606) 0 0 / 100% 40px no-repeat, repeating-linear-gradient(#2fe060 0 2px, #060606 2px 4px); }
  `;

  private quote(label: string, w: number[], v: string[], amt: string, note: string) {
    return html`
      <div class="lab" style="--w:${w[0]}">${label}</div>
      <div class="q" style="--w:${w[1]}"><span>${v[0]}</span><span class="drop">${v[1]}</span><span>${v[2]}</span>
        <span class="cnt"><b class="red">${v[3]}</b><b class="white">${v[4]}</b><b>${v[5]}</b></span></div>
      <div class="amt" style="--w:${w[2]}">${amt}<span>亿</span></div>
      <div class="lab bright" style="--w:${w[3]}">${note}</div>`;
  }

  private header() {
    return html`<header class="title">
      ${logo(28)}<span class="brand">东方财富</span><span class="edition">经典版</span><i class="vbar"></i>
      <div class="menu">${MENU.map(([n, k]) => html`<button>${n}(<u>${k}</u>)</button>`)}</div><i class="vbar"></i>
      <div class="pills">
        <button class="pill">${icon(19, 19, svg`<path d="M15 15.500A8 8 0 1117 8" stroke-width="1.500"></path><path d="M5 4l4 5 4-5M9 9v6M5.500 9.500h7M5.500 12.500h7M18 9l-4 5h4l-3 5" stroke-width="1.300"></path>`)}快速交易F12</button>
        <button class="pill">${icon(18, 17, svg`<path d="M1 1h6v6H1zM11 1h6v6h-6zM1 11h6v5H1z" stroke-width="1.500"></path><path d="M10 10h8v7h-8z" fill="currentColor" stroke="none"></path>`)}多窗口</button>
        <div class="slot"><button class="pill latent" aria-label="自定义">${icon(18, 17, svg`<path d="M2 1h6v6H2zM2 11h4M8 9l-6 7" stroke-width="1.500"></path>`)}</button>
          <div class="notice">查看46条新消息 ${icon(14, 14, svg`<path d="M1 1l12 12M13 1L1 13" stroke-width="1.300"></path>`)}</div></div>
      </div>
      <div class="wins">${WINDOW_ICONS.map(([n, p], i) => html`<button aria-label=${n}>${i === 0 ? html`<span class="badge">46</span>` : nothing}<svg class="ico" width="21" height="20" viewBox="0 0 22 21" fill="none" stroke="#aaa" aria-hidden="true">${p}</svg></button>`)}</div>
    </header>
    <nav class="nav">
      ${NAV.map(([n, c], i) => html`<a href="#" class=${i === 2 ? "wide" : i === 15 ? "snug" : ""}>${n}${c ? caret : nothing}</a>`)}
      <span class="more">${icon(13, 11, svg`<path d="M1 1l5 4.500-5 4.500M7 1l5 4.500-5 4.500"></path>`)}</span>
      <a href="#" class="tail">打开导航</a><a href="#" class="tail">返回</a>
    </nav>`;
  }

  private charts() {
    return html`<section class="center">
      <div class="tools">
        <div class="set">${PERIODS.map((p) => html`<button class=${p === "日线" ? "on" : ""}>${p}${p === "5日" ? caret : nothing}</button>`)}<button class="more">更多周期${caret}</button></div>
        <div class="set">
          <button class="sq" aria-label="放大">${icon(14, 14, svg`<path d="M7 0v14M0 7h14" stroke-width="2"></path>`)}</button>
          <button class="sq" aria-label="缩小">${icon(14, 14, svg`<path d="M0 7h14" stroke-width="2"></path>`)}</button>
          <button class="on">复权${caret}</button><button>叠加${caret}</button><button>画线</button><button>经典</button>
          <button>隐藏${icon(11, 11, svg`<path d="M0 0l5 5.500L0 11zM6 0l5 5.500L6 11z" fill="currentColor" stroke="none"></path>`)}</button>
          <button class="sq" aria-label="全屏">${icon(18, 18, svg`<path d="M2 7V2h5M11 2h5v5M16 11v5h-5M7 16H2v-5M2 2l5 5M16 2l-5 5M16 16l-5-5M2 16l5-5" stroke-width="1.300"></path>`)}</button>
        </div>
      </div>
      <div class="pane p1">
        <div class="legend"><div class="row">
          <div class="items"><span class="name yellow">COMEX黄金</span><span class="name dim">(日线,前复权)</span><span class="name dim">顾比工作线</span>
            ${LEGEND1.map(([t, c]) => html`<span class="item" style="color:${c}">${t}${markDown}</span>`)}
            <span class="item" style="color:#ff0">CA:1839.3</span></div>
          <button class="set-ma">设置均线${caret}</button></div></div>
        <price-chart></price-chart>
      </div>
      <div class="pane p2">
        <div class="legend l2"><div class="row">
          <div class="items"><span class="name dim">综判线指标</span>
            ${LEGEND2.map(([t, c, m]) => html`<span class="item" style="color:${c}">${t}${m === "v" ? markDown : markFlat}</span>`)}
            <span class="item" style="color:#ff0">NOTEXT成</span></div>
          <div class="ops"><button>改参数</button><button>加指标</button><button>换指标</button>
            <button class="xbox" aria-label="关闭指标">${icon(11, 11, svg`<path d="M1 1l9 9M10 1l-9 9"></path>`)}</button></div></div></div>
        <indicator-chart></indicator-chart>
      </div>
      <div class="dates">
        <button aria-label="向前">${icon(12, 12, svg`<path d="M6 0L1 6l5 6M11 0L6 6l5 6"></path>`)}</button>
        <svg viewBox="63 844 1330 25">${DATES.map(([t, x]) => svg`<text x=${x} y="861" class=${t === "2022" ? "year" : ""}>${t}</text>`)}</svg>
        <button aria-label="向后">${icon(12, 12, svg`<path d="M1 0l5 6-5 6M6 0l5 6-5 6"></path>`)}</button>
      </div>
      <div class="templates">
        <button class="box fill">指标</button><button class="box fill">模板</button><button class="box">保存</button><button class="box">管理</button>
        <div class="list">${TEMPLATES.map((t) => html`<button class=${t.includes("MACD") ? "yellow" : ""}>${t}</button>`)}</div>
        <button class="box">更多</button>
      </div>
      <div class="strip"><i></i></div>
      <div class="tabs"><button class="tab">关联品种</button>
        ${icon(22, 20, svg`<path d="M1 10V1h20v9" stroke-dasharray="2 1"></path><path d="M1 11h20v8H1zM11 10V4M8 6l3-3 3 3" stroke-width="1.500"></path>`)}</div>
    </section>`;
  }

  private panel() {
    return html`<aside class="quote">
      <div class="head">
        <i class="tri l"></i><h1>COMEX黄金</h1><i class="tri r"></i>
        <span class="code">GC00Y</span>
        <div class="deal"><span class="px">1812.9</span><span class="chg">+5.6<br />+0.31%</span>
          <button class="add" aria-label="加自选">${icon(13, 13, svg`<path d="M6.500 0v13M0 6.500h13" stroke-width="2"></path>`)}</button></div>
      </div>
      <div class="tip">${icon(17, 17, svg`<circle cx="8.500" cy="8.500" r="7.500" stroke="#999"></circle><path d="M8.500 7v6M8.500 4v2" stroke="#999" stroke-width="1.500"></path>`)}当前品种行情延时展示</div>
      <div class="lvl"><span>卖一</span>1813.4<b>1</b></div>
      <div class="lvl"><span>买一</span>1810.8<b>1</b></div>
      <div class="sec">分时成交<button>详</button></div>
      <div class="ticks">
        <table>
          <colgroup><col style="width:50px" /><col style="width:106px" /><col style="width:14px" /><col /></colgroup>
          <thead><tr><th class="when">时间</th><th>价格</th><th></th><th class="q">现量</th></tr></thead>
          <tbody>${TICKS.map(([t, p, q], i) => {
            const dir = p.slice(6);
            return html`<tr class=${i ? "" : "first"}><td class="t">${t}</td><td>${p.slice(0, 6)}</td><td class="a">${dir ? vArrow(dir === "^") : nothing}</td><td class="q ${q.endsWith("g") ? "gr" : ""}">${q[0]}</td></tr>`;
          })}</tbody>
        </table>
        <div class="bar"><i></i></div>
      </div>
    </aside>`;
  }

  private taskbar() {
    return html`<footer class="task">
      <div class="weather"><svg class="ico" width="30" height="26" viewBox="0 0 30 26" aria-hidden="true"><circle cx="21" cy="9" r="8.500" fill="#fba81a"></circle><path d="M7 24a6 6 0 010-12 8 8 0 0115 1 5.500 5.500 0 011 11z" fill="#d3e0f7"></path><path d="M7 24a6 6 0 01-5-8q5 5 12 3t11 0a5.500 5.500 0 01-2 5z" fill="#b5cbf2"></path></svg>
        <div>25°C<br /><span>多云</span></div></div>
      <div class="apps">
        <button aria-label="开始"><svg class="ico" width="30" height="30" viewBox="0 0 30 30"><defs><linearGradient id="w" x2="1" y2="1"><stop stop-color="#55cdf7"></stop><stop offset="1" stop-color="#0067c0"></stop></linearGradient></defs><path fill="url(#w)" d="M0 0h14v14H0zM16 0h14v14H16zM0 16h14v14H0zM16 16h14v14H16z"></path></svg></button>
        <button aria-label="搜索"><svg class="ico" width="30" height="30" viewBox="0 0 30 30" fill="none" stroke="#222"><circle cx="17" cy="12" r="10" stroke-width="3"></circle><path d="M10 19l-8 9" stroke-width="4"></path></svg></button>
        <button aria-label="任务视图"><svg class="ico" width="30" height="30" viewBox="0 0 30 30"><path d="M0 8h22v20H0z" fill="#2a2a2a"></path><path d="M8 1h21v19H8z" fill="#f6f6f6"></path><path d="M8 8h14v12H8z" fill="#b8b8b8"></path></svg></button>
        <button class="run" aria-label="截图"><svg class="ico" width="30" height="30" viewBox="0 0 30 30" fill="none"><path d="M0 0h22v22H0z" fill="#f7f7f7"></path><path d="M4 18V4h13" stroke="#d93a1a" stroke-width="3" stroke-dasharray="3 2"></path><path d="M17 5v16M6 16h18" stroke="#8a949c" stroke-width="3"></path><circle cx="16" cy="26" r="3" stroke="#1a8fe0" stroke-width="2.500"></circle><circle cx="26" cy="15" r="3" stroke="#1a8fe0" stroke-width="2.500"></circle></svg></button>
        <button class="run on" aria-label="东方财富">${logo(30)}</button>
        <button class="run" aria-label="浏览器"><svg class="ico" width="30" height="30" viewBox="0 0 30 30" fill="none"><path d="M24 20A10 10 0 1125 14H8" stroke="#3cae2c" stroke-width="5"></path><path d="M3 27Q0 24 6 15T22 2q5-2 5 2" stroke="#7fd84a" stroke-width="2"></path></svg></button>
        <button class="run" aria-label="行情"><svg class="ico" width="30" height="30" viewBox="0 0 30 30" fill="none"><path d="M0 0h30v30H0z" fill="#53585a"></path><circle cx="14" cy="17" r="8.500" stroke="#e8a912" stroke-width="4"></circle><path d="M14 17a7 7 0 119-9" stroke="#e8a912" stroke-width="2.500"></path><circle cx="20" cy="10" r="5" stroke="#c99520" stroke-width="2"></circle></svg></button>
      </div>
      <div class="tray"><div>70℃<br />CPU</div>
        <div class="sys">
          <svg class="ico" width="18" height="12" viewBox="0 0 18 12" fill="none" stroke="#222" stroke-width="1.500"><path d="M1 10l8-8 8 8"></path></svg>
          <svg class="ico" width="43" height="20" viewBox="0 0 43 20" fill="none"><path d="M10 18L18 2l8 16M13 13h10" stroke="#999" stroke-width="3" stroke-dasharray="2 1"></path></svg>
          ${sogou(20)}
          <svg class="ico" width="42" height="20" viewBox="0 0 42 20" fill="none" stroke="#222" stroke-width="1.600"><path d="M22 8a13 13 0 0119 0M25 11a9 9 0 0113 0M28 14a5 5 0 017 0"></path><circle cx="31.500" cy="17" r="1"></circle></svg>
          <svg class="ico" width="21" height="18" viewBox="0 0 21 18" fill="none" stroke="#222" stroke-width="1.400"><path d="M1 6h3l5-4v14l-5-4H1zM12 6q2 3 0 6M15 4q3 5 0 10M18 2q4 7 0 14"></path></svg>
          <svg class="ico" width="21" height="18" viewBox="0 0 21 18" fill="none" stroke="#222" stroke-width="1.600"><path d="M8 4h10v11H6v-4M19 7v5"></path><path d="M8 7h7v5H8zM2 1v3M6 1v3M1 4h6v3H1zM4 7v9" fill="#222"></path></svg>
        </div>
        <div>8:09<br />2022/7/3</div></div>
    </footer>`;
  }

  render() {
    return html`<div class="page">
      ${this.header()}
      <main class="main">
        <div class="gutter"><i class="grip"></i></div>
        <div class="side">${SIDE.map((s, i) => html`<button class=${i === 1 ? "on" : s.length === 4 ? "four" : s.length === 2 ? "two" : ""}>${s.map((c) => html`<span>${c}</span>`)}</button>`)}</div>
        ${this.charts()}
        <div class="gutter right"><i class="grip"></i></div>
        ${this.panel()}
      </main>
      <div class="index">
        ${this.quote("沪", [37, 374, 95, 148], ["3387.64", "10.98", "-0.32%", "845", "75", "1214"], "4584.4", "沪股通暂停交易")}
        ${this.quote("深", [36, 397, 94, 150], ["12860.36", "35.84", "-0.28%", "1082", "75", "1511"], "5929.0", "深股通暂停交易")}
        <div class="lab" style="--w:82">沪深300</div>
        <div class="q" style="--w:267"><span>4466.72</span><span class="drop">18.29</span><span>-0.41%</span></div>
      </div>
      <div class="news">
        <div class="links">
          <a href="#">${icon(17, 16, svg`<path d="M2 1h9v8M2 1v13h6M4 4h5M4 7h4M15 5l-6 8-2 2" stroke-width="1.600"></path>`)}留言</a>
          <a href="#">${icon(17, 16, svg`<path d="M1 1h15v11H1zM4 15h9M9 3v6M6 6l3-3 3 3" stroke-width="1.500"></path>`)}最快主站</a></div>
        <div class="feed"><a href="#" class="live">24小时直播:</a>铁路货物发送量同比增5.5% 多指标创纪录<time>23:40</time>金盘科技桂林基地储能装备数字化工厂、高端干式变</div>
        <div class="alert"><i class="dia"></i><span>清研环境 大笔卖出</span><button>[全部]</button></div>
        <div class="state">
          <label class="find">${icon(15, 15, svg`<circle cx="6" cy="6" r="4.500" stroke-width="1.500"></circle><path d="M9.500 9.500l4 4" stroke-width="2"></path>`)}<input type="text" aria-label="搜索" /></label>
          <svg class="ico" width="17" height="17" viewBox="0 0 17 17" aria-hidden="true"><path fill="#f3f36a" d="M8 0h2l1 2q3 1 3 6 0 3 3 5H0q3-2 3-5 0-5 4-6zM6 14h5l-2.500 3z"></path></svg>
          <svg class="ico" width="24" height="16" viewBox="0 0 24 16" aria-hidden="true"><path fill="#28b45a" d="M1 11h5v5H1zM9 6h5v10H9zM17 0h5v16h-5z"></path></svg>
          <span>CN</span><span>07/03</span><span>08:09:25</span></div>
      </div>
      ${this.taskbar()}
      <div class="meter"></div>
      <div class="ime">${sogou(34)}<div>
        ${icon(14, 16, svg`<path d="M1 15L7 1l6 14M3 10h8" stroke-width="2"></path>`)}
        ${icon(14, 14, svg`<circle cx="3" cy="3" r="1.500" fill="currentColor"></circle><path d="M10 7q4 0 0 6" stroke-width="2.500"></path>`)}
        ${icon(16, 16, svg`<circle cx="8" cy="8" r="6.500" stroke-width="2.500"></circle><path d="M5 9q3 4 6 0M5.500 5v2M10.500 5v2" stroke-width="1.500"></path>`)}
        ${icon(14, 16, svg`<path d="M7 3v5" stroke-width="5" stroke-linecap="round"></path><path d="M2 7q0 5 5 5t5-5M7 12v4" stroke-width="1.500"></path>`)}
        ${icon(16, 14, svg`<path d="M1 1h14v12H1z" stroke-width="2"></path><path d="M3 4.500h10M3 7.500h10M5 10.500h6" stroke-width="1.800" stroke-dasharray="2 1"></path>`)}
        <svg class="ico" width="14" height="16" viewBox="0 0 14 16" fill="#c4c4c4" aria-hidden="true"><circle cx="6" cy="4" r="4"></circle><path d="M0 15q0-7 6-7h7v7z"></path></svg>
        <svg class="ico" width="16" height="14" viewBox="0 0 16 14" fill="currentColor" aria-hidden="true"><path d="M5 0q3 3 6 0l5 2-1 5h-2v7H3V7H1L0 2z"></path></svg>
        <svg class="ico" width="14" height="14" viewBox="0 0 14 14" fill="currentColor" aria-hidden="true"><path d="M0 2q0-2 2-2h4v6H0zM8 0h4q2 0 2 2v4H8zM0 8h6v6H2q-2 0-2-2zM8 8h6v4q0 2-2 2H8z"></path></svg>
      </div></div>
    </div>`;
  }
}
